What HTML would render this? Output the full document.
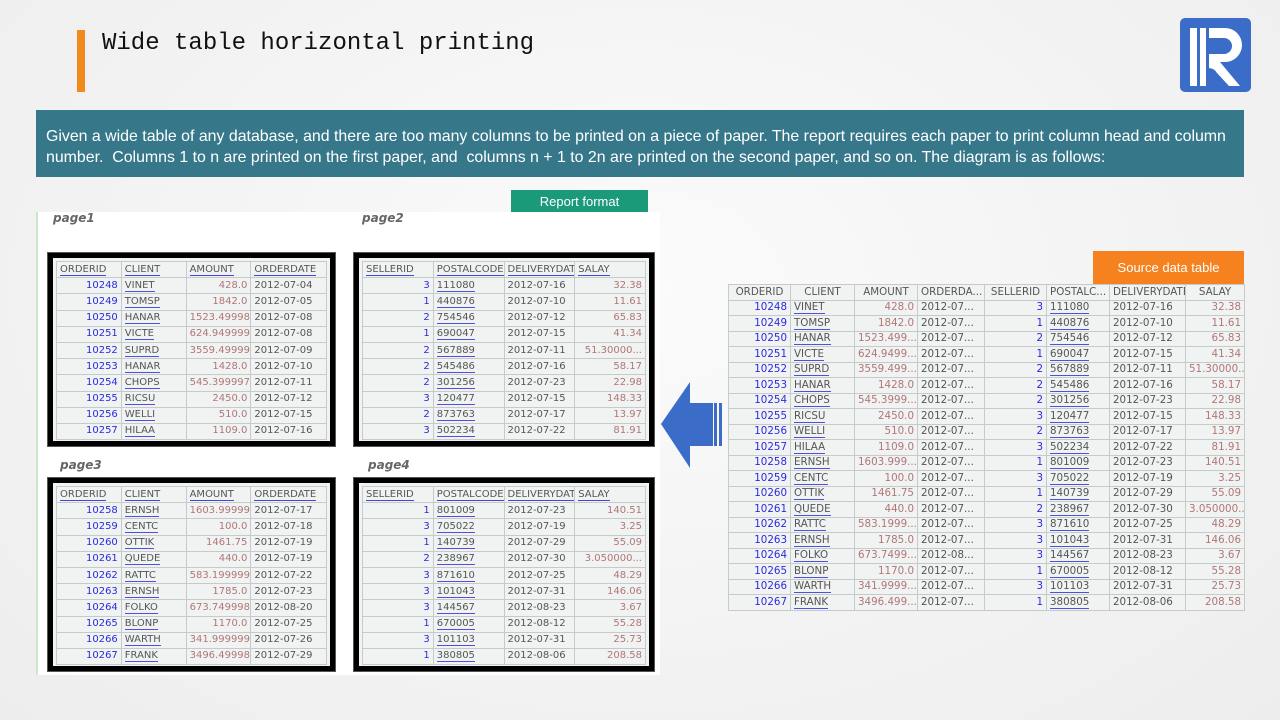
<!DOCTYPE html>
<html><head><meta charset="utf-8"><style>
body{margin:0;width:1280px;height:720px;overflow:hidden;background:radial-gradient(ellipse at 50% 40%,#fbfbfb,#ededed);font-family:"Liberation Sans",sans-serif;position:relative}
.abs{position:absolute}
table{border-collapse:collapse;font-family:"DejaVu Sans",sans-serif;font-size:10px;background:#f1f3f3;table-layout:fixed}
td{border:1px solid #c5cbcb;padding:0 3px;height:15.2px;line-height:14px;white-space:nowrap;overflow:hidden;color:#555}
td.hu span{border-bottom:1px solid #4444dd;color:#555}
td.b{color:#2a2ae0;text-align:right}
td.a{color:#b07676;text-align:right}
td.u span{border-bottom:1.5px solid #5050e0}
#src td{height:14.5px;line-height:13px;font-size:10.3px}
.frame{position:absolute;border:5px solid #000;outline:1px solid #555;background:#f1f3f3;padding:3px}
.pl{position:absolute;font:italic bold 12px "DejaVu Sans",sans-serif;color:#666}
</style></head><body>
<div class="abs" style="left:77px;top:30px;width:8px;height:62px;background:#f08a1c"></div>
<div class="abs" style="left:102px;top:30px;font:24px 'Liberation Mono',monospace;color:#111">Wide table horizontal printing</div>
<svg class="abs" style="left:1180px;top:18px" width="72" height="75" viewBox="0 0 72 75"><rect width="71" height="74" rx="5" fill="#3a6cc8"/><rect x="10" y="10" width="7" height="58" fill="#fff"/><rect x="20" y="10" width="6" height="58" fill="#fff"/><path d="M29 10 H45 A17 17 0 0 1 45 44 H40 L60 68 H49 L37 55 A10 10 0 0 0 29 50 Z M29 20 V36 H44 A8 8 0 0 0 44 20 Z" fill="#fff" fill-rule="evenodd"/></svg>
<div class="abs" style="left:36px;top:110px;width:1208px;height:67px;background:#36788a;color:#fff;font-size:15.9px;line-height:21px;box-sizing:border-box;padding:16px 10px 0 10px">Given a wide table of any database, and there are too many columns to be printed on a piece of paper. The report requires each paper to print column head and column number.&nbsp; Columns 1 to n are printed on the first paper, and&nbsp; columns n + 1 to 2n are printed on the second paper, and so on. The diagram is as follows:</div>
<div class="abs" style="left:511px;top:190px;width:137px;height:23px;background:#1a9a78;color:#fff;font-size:13px;text-align:center;line-height:23px">Report format</div>
<div class="abs" style="left:36px;top:212px;width:622px;height:463px;background:#fff;border-left:2px solid #c8e8c8"></div>
<div class="pl" style="left:53px;top:211px">page1</div>
<div class="pl" style="left:362px;top:211px">page2</div>
<div class="pl" style="left:60px;top:458px">page3</div>
<div class="pl" style="left:368px;top:458px">page4</div>
<div id="p1" class="frame" style="left:48px;top:253px;width:271px;height:177px"></div>
<div id="p2" class="frame" style="left:354px;top:253px;width:284px;height:177px"></div>
<div id="p3" class="frame" style="left:48px;top:478px;width:271px;height:177px"></div>
<div id="p4" class="frame" style="left:354px;top:478px;width:284px;height:177px"></div>
<svg class="abs" style="left:658px;top:378px" width="66" height="94"><path d="M3 46 L32 4 V25 H55 V68 H32 V90 Z" fill="#3a6cc8"/><rect x="56" y="25" width="3" height="43" fill="#3a6cc8"/><rect x="61" y="25" width="3" height="43" fill="#3a6cc8"/></svg>
<div class="abs" style="left:1093px;top:251px;width:151px;height:33px;background:#f5821f;color:#fff;font-size:13px;text-align:center;line-height:33px">Source data table</div>
<div id="src" class="abs" style="left:728px;top:284px;width:516px"></div>
<script>
var R=[[10248,"VINET","428.0","428.0","2012-07-04",3,111080,"2012-07-16","32.38"],
[10249,"TOMSP","1842.0","1842.0","2012-07-05",1,440876,"2012-07-10","11.61"],
[10250,"HANAR","1523.49998...","1523.499...","2012-07-08",2,754546,"2012-07-12","65.83"],
[10251,"VICTE","624.949999...","624.9499...","2012-07-08",1,690047,"2012-07-15","41.34"],
[10252,"SUPRD","3559.49999...","3559.499...","2012-07-09",2,567889,"2012-07-11","51.30000..."],
[10253,"HANAR","1428.0","1428.0","2012-07-10",2,545486,"2012-07-16","58.17"],
[10254,"CHOPS","545.399997...","545.3999...","2012-07-11",2,301256,"2012-07-23","22.98"],
[10255,"RICSU","2450.0","2450.0","2012-07-12",3,120477,"2012-07-15","148.33"],
[10256,"WELLI","510.0","510.0","2012-07-15",2,873763,"2012-07-17","13.97"],
[10257,"HILAA","1109.0","1109.0","2012-07-16",3,502234,"2012-07-22","81.91"],
[10258,"ERNSH","1603.99999...","1603.999...","2012-07-17",1,801009,"2012-07-23","140.51"],
[10259,"CENTC","100.0","100.0","2012-07-18",3,705022,"2012-07-19","3.25"],
[10260,"OTTIK","1461.75","1461.75","2012-07-19",1,140739,"2012-07-29","55.09"],
[10261,"QUEDE","440.0","440.0","2012-07-19",2,238967,"2012-07-30","3.050000..."],
[10262,"RATTC","583.199999...","583.1999...","2012-07-22",3,871610,"2012-07-25","48.29"],
[10263,"ERNSH","1785.0","1785.0","2012-07-23",3,101043,"2012-07-31","146.06"],
[10264,"FOLKO","673.749998...","673.7499...","2012-08-20",3,144567,"2012-08-23","3.67"],
[10265,"BLONP","1170.0","1170.0","2012-07-25",1,670005,"2012-08-12","55.28"],
[10266,"WARTH","341.999999...","341.9999...","2012-07-26",3,101103,"2012-07-31","25.73"],
[10267,"FRANK","3496.49998...","3496.499...","2012-07-29",1,380805,"2012-08-06","208.58"]];
function u(s){return '<span>'+s+'</span>'}
function pg(id,a,b,left){var h='<table style="width:100%">';
 if(left){h+='<colgroup><col style="width:24%"><col style="width:24%"><col style="width:24%"><col></colgroup><tr><td class="hu">'+u('ORDERID')+'</td><td class="hu">'+u('CLIENT')+'</td><td class="hu">'+u('AMOUNT')+'</td><td class="hu">'+u('ORDERDATE')+'</td></tr>';}
 else{h+='<colgroup><col style="width:25%"><col style="width:25%"><col style="width:25%"><col></colgroup><tr><td class="hu">'+u('SELLERID')+'</td><td class="hu">'+u('POSTALCODE')+'</td><td class="hu">'+u('DELIVERYDATE')+'</td><td class="hu">'+u('SALAY')+'</td></tr>';}
 for(var i=a;i<b;i++){var r=R[i];
  if(left)h+='<tr><td class="b">'+r[0]+'</td><td class="u">'+u(r[1])+'</td><td class="a">'+r[2]+'</td><td>'+r[4]+'</td></tr>';
  else h+='<tr><td class="b">'+r[5]+'</td><td class="u">'+u(r[6])+'</td><td>'+r[7]+'</td><td class="a">'+r[8]+'</td></tr>';}
 document.getElementById(id).innerHTML=h+'</table>';}
pg('p1',0,10,1);pg('p2',0,10,0);pg('p3',10,20,1);pg('p4',10,20,0);
var w=[62,64,63,67,62,63,76,59],hd=['ORDERID','CLIENT','AMOUNT','ORDERDA...','SELLERID','POSTALC...','DELIVERYDATE','SALAY'];
var h='<table style="width:516px"><colgroup>';w.forEach(function(x){h+='<col style="width:'+x+'px">'});h+='</colgroup><tr>';
hd.forEach(function(x){h+='<td style="text-align:center">'+x+'</td>'});h+='</tr>';
R.forEach(function(r){var od=r[4].slice(0,7)+'...';h+='<tr><td class="b">'+r[0]+'</td><td class="u">'+u(r[1])+'</td><td class="a">'+r[3]+'</td><td>'+od+'</td><td class="b">'+r[5]+'</td><td class="u">'+u(r[6])+'</td><td>'+r[7]+'</td><td class="a">'+r[8]+'</td></tr>'});
document.getElementById('src').innerHTML=h+'</table>';
</script>
</body></html>
